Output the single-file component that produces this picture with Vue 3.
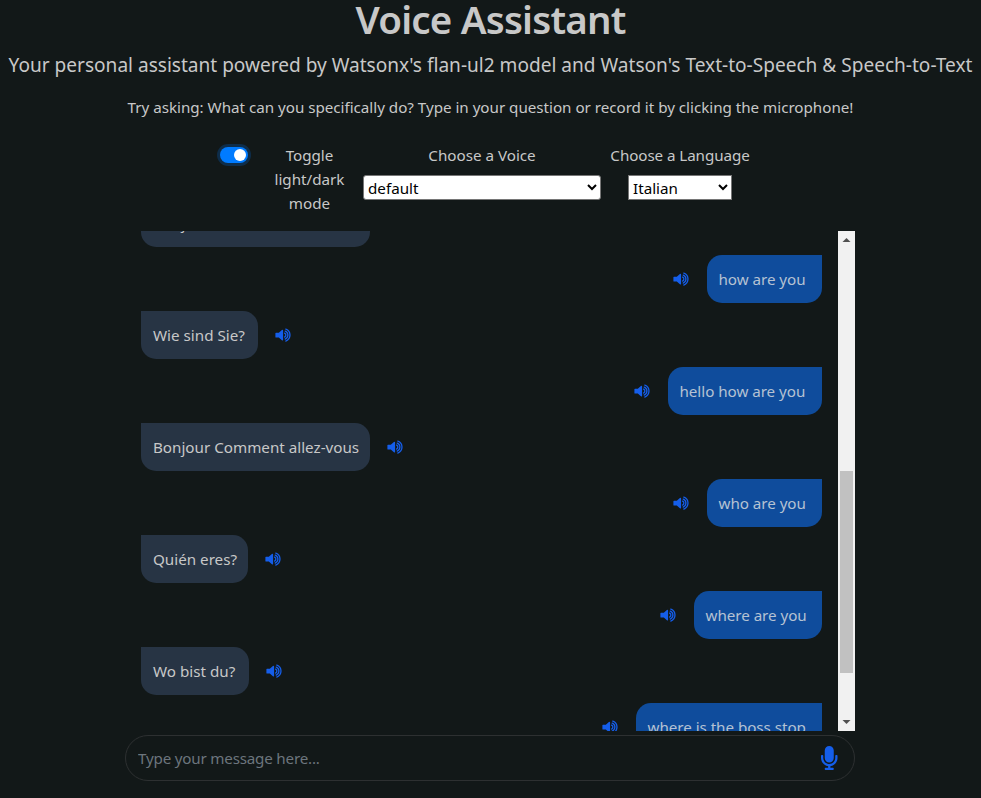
<script setup>
import { ref } from 'vue'

const dark = ref(true)
const voice = ref('default')
const language = ref('Italian')
const draft = ref('')

const messages = [
  { from: 'bot', text: 'Bonjour Comment allez-vous', width: 229 },
  { from: 'me', text: 'how are you', width: 115 },
  { from: 'bot', text: 'Wie sind Sie?', width: 117 },
  { from: 'me', text: 'hello how are you', width: 154 },
  { from: 'bot', text: 'Bonjour Comment allez-vous', width: 229 },
  { from: 'me', text: 'who are you', width: 115 },
  { from: 'bot', text: 'Quién eres?', width: 107 },
  { from: 'me', text: 'where are you', width: 128 },
  { from: 'bot', text: 'Wo bist du?', width: 108 },
  { from: 'me', text: 'where is the boss stop', width: 186 },
]
</script>

<template>
  <main class="page">
    <h1><span>Voice Assistant</span></h1>
    <p class="lead">Your personal assistant powered by Watsonx's flan-ul2 model and Watson's Text-to-Speech &amp; Speech-to-Text</p>
    <p class="hint">Try asking: What can you specifically do? Type in your question or record it by clicking the microphone!</p>

    <div class="controls">
      <button class="switch" :class="{ on: dark }" @click="dark = !dark"><i></i></button>
      <div class="toggle-label">Toggle<br />light/dark<br />mode</div>
      <label class="voice">
        <span>Choose a Voice</span>
        <select v-model="voice"><option>default</option></select>
      </label>
      <label class="language">
        <span>Choose a Language</span>
        <select v-model="language"><option>Italian</option></select>
      </label>
    </div>

    <section class="chat">
      <div class="messages">
        <div v-for="(m, i) in messages" :key="i" class="row" :class="m.from">
          <div class="bubble" :style="{ width: m.width + 'px' }">{{ m.text }}</div>
          <svg class="speaker" viewBox="-0.4 -0.3 17 14">
            <path class="cone" d="M.6 4.4H3.4L6.5 1.7Q7.7 1 7.7 2.2V11.4Q7.7 12.6 6.5 11.9L3.4 9.2H.6Q0 9.2 0 8.6V5Q0 4.4.6 4.4Z" />
            <path d="M9.2 4.8A2.2 2.2 0 0 1 9.2 8.8M9.8 2.8A4.3 4.3 0 0 1 9.8 10.8M10.4 .8A6.4 6.4 0 0 1 10.4 12.8" />
          </svg>
        </div>
      </div>
      <div class="scrollbar">
        <svg viewBox="0 0 17 17"><path d="M4.5 11L8.5 7L12.5 11Z" /></svg>
        <div class="track"><div class="thumb"></div></div>
        <svg viewBox="0 0 17 17"><path d="M4.5 6L8.5 10L12.5 6Z" /></svg>
      </div>
    </section>

    <div class="composer">
      <input v-model="draft" type="text" placeholder="Type your message here..." />
      <svg class="mic" viewBox="0 0 352 512"><path d="M176 352c53.02 0 96-42.98 96-96V96c0-53.02-42.98-96-96-96S80 42.98 80 96v160c0 53.02 42.98 96 96 96zm160-160h-16c-8.84 0-16 7.16-16 16v48c0 74.8-64.49 134.82-140.79 127.38C96.71 376.89 48 317.11 48 250.3V208c0-8.84-7.16-16-16-16H16c-8.84 0-16 7.16-16 16v40.16c0 89.64 63.97 169.55 152 181.69V464H96c-8.84 0-16 7.16-16 16v16c0 8.84 7.16 16 16 16h160c8.84 0 16-7.16 16-16v-16c0-8.84-7.16-16-16-16h-56v-33.77C285.71 418.47 352 344.9 352 256v-48c0-8.84-7.16-16-16-16z" /></svg>
    </div>
  </main>
</template>

<style>
body {
  margin: 0;
  background: #121818;
  overflow: hidden;
}
</style>

<style scoped>
.page {
  box-sizing: border-box;
  width: 981px;
  height: 798px;
  overflow: hidden;
  display: flex;
  flex-direction: column;
  background: #121818;
  color: #c8c8c8;
  font: 15.2px/24px "Noto Sans", "Open Sans", sans-serif;
}
h1, p {
  margin: 0;
  text-align: center;
  white-space: nowrap;
}
h1 {
  height: 43px;
  font-size: 38.5px;
  font-weight: 600;
  letter-spacing: -0.8px;
  line-height: 38px;
}
.lead {
  margin-top: 7px;
  font-size: 19.07px;
  line-height: 30px;
}
.hint {
  margin-top: 15px;
  letter-spacing: -0.02px;
}
.controls {
  display: flex;
  height: 88px;
  margin-top: 24px;
  padding-left: 220px;
  line-height: 24px;
  text-align: center;
  white-space: nowrap;
}
.switch {
  display: flex;
  align-items: center;
  box-sizing: border-box;
  width: 28px;
  height: 16px;
  margin: 4px 25px 0 0;
  padding: 0 2px;
  border: 0;
  border-radius: 8px;
  background: #555;
  box-shadow: 0 0 0 3px #0e2d4a;
}
.switch.on {
  justify-content: flex-end;
  background: #007bff;
}
.switch i {
  width: 12px;
  height: 12px;
  border-radius: 50%;
  background: #fff;
}
.toggle-label {
  width: 73px;
}
.voice, .language {
  display: flex;
  flex-direction: column;
  align-items: center;
}
.voice {
  width: 238px;
  margin-left: 17px;
}
.language {
  width: 138px;
  margin-left: 10px;
}
.language span {
  letter-spacing: -0.08px;
}
select {
  height: 25px;
  margin-top: 8px;
  padding: 0;
  border: 1px solid #767676;
  border-radius: 3px;
  background: #fff;
  color: #000;
  font: 15.2px "Noto Sans", "Open Sans", sans-serif;
}
.voice select {
  width: 238px;
}
.language select {
  width: 104px;
  border-radius: 0;
}
.chat {
  display: flex;
  height: 500px;
  width: 714px;
  margin-left: 141px;
}
.messages {
  flex: 1;
  display: flex;
  flex-direction: column;
  gap: 8px;
  margin-right: 16px;
  overflow: hidden;
}
.row {
  display: flex;
  flex: none;
  align-items: center;
  gap: 17px;
}
.row:first-child {
  margin-top: -32px;
}
.row.me {
  flex-direction: row-reverse;
}
.bubble {
  box-sizing: border-box;
  height: 48px;
  padding: 12px 0 12px 12px;
  border-radius: 0 15px 15px 15px;
  background: #273444;
  white-space: nowrap;
}
.me .bubble {
  padding-left: 11.5px;
  border-radius: 15px 0 15px 15px;
  background: #0f4c9c;
  color: #b5c2d3;
  letter-spacing: -0.04px;
}
.speaker {
  width: 17px;
  height: 14px;
  fill: none;
  stroke: #155eea;
  stroke-width: 1.3px;
  stroke-linecap: round;
}
.cone {
  fill: #155eea;
  stroke: none;
}
.scrollbar {
  display: flex;
  flex-direction: column;
  width: 17px;
  background: #f1f1f1;
}
.scrollbar svg {
  width: 17px;
  height: 17px;
  fill: #505050;
}
.track {
  flex: 1;
}
.thumb {
  width: 13px;
  height: 202px;
  margin: 223px 2px 0;
  background: #c1c1c1;
}
.composer {
  display: flex;
  align-items: center;
  box-sizing: border-box;
  width: 730px;
  height: 46px;
  margin: 4px 0 0 125px;
  padding: 0 16.5px 0 12px;
  border: 1px solid #2d3031;
  border-radius: 23px;
}
input {
  flex: 1;
  padding: 0;
  border: 0;
  outline: 0;
  background: transparent;
  color: #c8c8c8;
  font: 15.2px/24px "Noto Sans", "Open Sans", sans-serif;
  letter-spacing: -0.2px;
}
input::placeholder {
  color: #6c757d;
}
.mic {
  width: 16.5px;
  height: 24px;
  fill: #155eea;
}
</style>
